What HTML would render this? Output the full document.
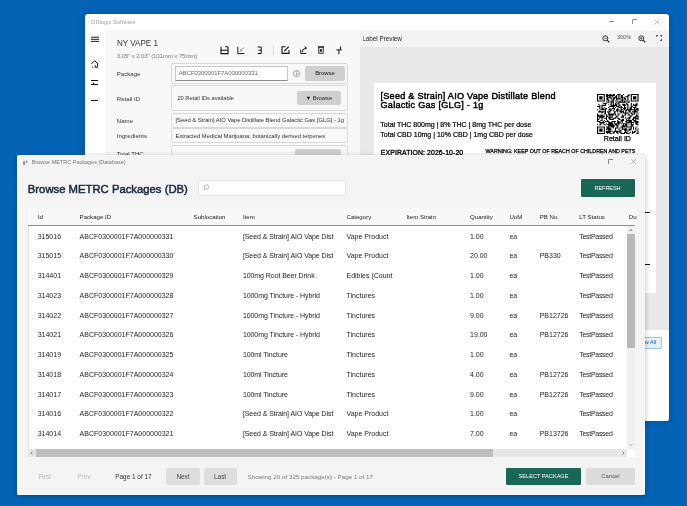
<!DOCTYPE html>
<html><head><meta charset="utf-8">
<style>
*{margin:0;padding:0;box-sizing:border-box}
html,body{width:687px;height:506px;overflow:hidden;background:#0563b6;font-family:"Liberation Sans",sans-serif}
#main,#dlg{will-change:transform}
.a{position:absolute}
.t{position:absolute;white-space:nowrap;line-height:1}
#main{left:85px;top:14px;width:584px;height:406.5px;background:#fff;border-radius:3px;overflow:hidden;box-shadow:0 0 6px rgba(0,20,60,.3)}
#dlg{left:17px;top:155px;width:628px;height:340px;background:#f4f4f4;border-radius:2.5px;overflow:hidden;box-shadow:0 1px 5px rgba(0,0,0,.3),inset 0 0 0 0.6px #fafafa}
.box{position:absolute;border:1px solid #d8d8d8;border-radius:2px;background:#f7f8fa}
.btn{position:absolute;background:#cfcfcf;border-radius:2px;text-align:center;color:#222;white-space:nowrap;line-height:1}
svg{position:absolute;overflow:visible}
</style></head><body>
<div id="main" class="a">
  <div class="t" style="left:6px;top:5.7px;font-size:5.75px;color:#a0a0a0">ORlogix Software</div>
  <!-- window controls -->
  <div class="a" style="left:524px;top:7px;width:5px;height:0.8px;background:#888"></div>
  <svg style="left:546.5px;top:4.8px" width="6" height="6"><path d="M0.5 5V0.5H5" fill="none" stroke="#777" stroke-width="0.8"/></svg>
  <svg style="left:569.4px;top:4.8px" width="7" height="7"><path d="M0.3 0.3L5.7 5.7M5.7 0.3L0.3 5.7" stroke="#aaa" stroke-width="0.7"/></svg>
  <!-- sidebar icons -->
  <svg style="left:6px;top:22px" width="9" height="7"><path d="M0 1.2H8M0 3.3H8M0 5.4H8" stroke="#111" stroke-width="0.95"/></svg>
  <svg style="left:6px;top:45.5px" width="9" height="9"><path d="M0.4 3.9L3.7 0.6L6.9 3.9 M6.6 3.6V7.2H4.2V5.2 M1 7.2H2.4" fill="none" stroke="#111" stroke-width="1"/></svg>
  <svg style="left:6px;top:65px" width="9" height="8"><path d="M0 1.5H7M0 5.5H7M2.4 3.6V5.5" stroke="#111" stroke-width="1"/></svg>
  <div class="a" style="left:6px;top:85.5px;width:7px;height:1.3px;background:#111"></div>

  <!-- left panel -->
  <div class="a" style="left:20px;top:16px;width:255px;height:391px;background:#f7f8fa"></div>
  <div class="t" style="left:31.8px;top:24.4px;font-size:9.5px;color:#3a3a3a;transform:scaleX(0.85);transform-origin:0 0">NY VAPE 1</div>
  <div class="t" style="left:31.8px;top:39.2px;font-size:6.2px;color:#7a7a7a;letter-spacing:-0.17px">3.05" x 2.03" (101mm x 75mm)</div>
  <!-- toolbar icons -->
  <svg style="left:134.5px;top:31.5px" width="10" height="10"><path d="M1 0.8V7.6H8V0.8 M5.3 0.8H8 M1 4.3H8" fill="none" stroke="#111" stroke-width="1.1"/></svg>
  <svg style="left:152px;top:31.5px" width="10" height="10"><path d="M0.8 0.8V7.6H7.6" fill="none" stroke="#111" stroke-width="0.95"/><path d="M2.6 5.8L6.6 1.6 M3.2 3.4L4.8 5" fill="none" stroke="#555" stroke-width="0.7"/></svg>
  <svg style="left:172px;top:31.5px" width="10" height="10"><path d="M0.6 1H4.2V7.5H0.8 M1.6 4.2H4.2" fill="none" stroke="#111" stroke-width="1"/></svg>
  <div class="a" style="left:187.5px;top:31.5px;width:0.8px;height:9px;background:#dcdcdc"></div>
  <svg style="left:195.5px;top:32px" width="10" height="10"><path d="M4.6 0.8H1V7.4H8V4" fill="none" stroke="#111" stroke-width="1.1"/><path d="M3.2 5.2L7.8 0.6" stroke="#111" stroke-width="1.1"/></svg>
  <svg style="left:214.5px;top:32px" width="10" height="10"><path d="M0.8 3.6V7.4H6.3" fill="none" stroke="#111" stroke-width="1"/><path d="M2.6 5.8C2.6 3.4 3.8 2.1 6.3 2.1 M4.8 0.6L6.5 2.1L4.8 3.6" fill="none" stroke="#111" stroke-width="1"/></svg>
  <svg style="left:233px;top:32px" width="10" height="10"><path d="M0 1H6" stroke="#111" stroke-width="1.3"/><path d="M0.8 1.5V7.3H5.2V1.5" fill="none" stroke="#111" stroke-width="0.9"/><rect x="2.1" y="3" width="1.6" height="2.8" fill="#111"/></svg>
  <svg style="left:250.5px;top:32px" width="10" height="10"><path d="M4.6 0.4V3.6 M0.4 3.9H5.8 M2.9 3.9V8.2" fill="none" stroke="#111" stroke-width="1"/></svg>

  <!-- form -->
  <div class="t" style="left:31.8px;top:57px;font-size:6.1px;color:#333">Package</div>
  <div class="box" style="left:86px;top:49.3px;width:177px;height:20.5px"></div>
  <div class="a" style="left:89.7px;top:52.2px;width:113.5px;height:14.6px;background:#fff;border:1px solid #c6c6c6;border-bottom-color:#8c8c8c"></div>
  <div class="t" style="left:93.8px;top:56.6px;font-size:5.9px;color:#666">ABCF0300001F7A000000331</div>
  <svg style="left:208px;top:56px" width="8" height="8"><circle cx="3.5" cy="3.5" r="3" fill="none" stroke="#777" stroke-width="0.7"/><path d="M3.5 2.8V5.3" stroke="#777" stroke-width="0.8"/><circle cx="3.5" cy="1.8" r="0.45" fill="#777"/></svg>
  <div class="btn" style="left:220px;top:52.2px;width:40px;height:14.5px;font-size:5.9px;padding-top:4.7px;color:#111">Browse</div>

  <div class="t" style="left:31.8px;top:82px;font-size:6.1px;color:#333">Retail ID</div>
  <div class="box" style="left:86px;top:70.5px;width:177px;height:26px"></div>
  <div class="t" style="left:92.4px;top:82.3px;font-size:5.7px;color:#333">20 Retail IDs available</div>
  <div class="btn" style="left:212px;top:77px;width:43.6px;height:13.8px;font-size:5.8px;padding-top:5px">&#9660; Browse</div>

  <div class="t" style="left:31.8px;top:103.7px;font-size:6.1px;color:#333">Name</div>
  <div class="box" style="left:86px;top:98.5px;width:177px;height:15px"></div>
  <div class="t" style="left:90.5px;top:104.2px;font-size:5.8px;color:#333">[Seed &amp; Strain] AIO Vape Distillate Blend Galactic Gas [GLG] - 1g</div>

  <div class="t" style="left:31.8px;top:119.4px;font-size:6.1px;color:#333">Ingredients</div>
  <div class="box" style="left:86px;top:114.3px;width:177px;height:15px"></div>
  <div class="t" style="left:90.5px;top:119.8px;font-size:5.85px;color:#333">Extracted Medical Marijuana; botanically derived terpenes</div>

  <div class="t" style="left:31.8px;top:137px;font-size:6.1px;color:#333">Total THC</div>
  <div class="t" style="left:92.6px;top:137.5px;font-size:5.8px;color:#444">800</div>
  <div class="box" style="left:86px;top:131px;width:177px;height:26px"></div>
  <div class="btn" style="left:210px;top:134.5px;width:46px;height:14px"></div>

  <!-- preview -->
  <div class="a" style="left:275px;top:16px;width:309px;height:17px;background:#f3f3f3"></div>
  <div class="t" style="left:277.3px;top:22px;font-size:6.3px;color:#222;letter-spacing:0px">Label Preview</div>
  <div class="a" style="left:275px;top:16px;width:2.6px;height:17px;background:#f3f3f3"></div>
  <svg style="left:517px;top:20.5px" width="8" height="8"><circle cx="3.3" cy="3.3" r="2.5" fill="none" stroke="#222" stroke-width="0.9"/><path d="M5.2 5.2L7.3 7.3" stroke="#222" stroke-width="1.1"/><path d="M2 3.3H4.6" stroke="#222" stroke-width="0.7"/></svg>
  <div class="t" style="left:532px;top:21px;font-size:5.5px;color:#555">300%</div>
  <svg style="left:553px;top:20.5px" width="8" height="8"><circle cx="3.3" cy="3.3" r="2.5" fill="none" stroke="#222" stroke-width="0.9"/><path d="M5.2 5.2L7.3 7.3" stroke="#222" stroke-width="1.1"/><path d="M2 3.3H4.6M3.3 2V4.6" stroke="#222" stroke-width="0.7"/></svg>
  <svg style="left:570.7px;top:21.4px" width="7" height="7"><path d="M0.5 1.8V0.5H1.8 M4.2 0.5H5.5V1.8 M5.5 4.2V5.5H4.2" fill="none" stroke="#222" stroke-width="0.9"/></svg>
  <div class="a" style="left:275px;top:33px;width:309px;height:283px;background-color:#e4e4e4;background-image:radial-gradient(circle at 1px 1px,#ececec 0.6px,transparent 0.9px);background-size:2px 2px"></div>
  <div class="a" style="left:288.6px;top:69px;width:282px;height:210px;background:#fff"></div>
  <div class="t" style="left:295.5px;top:77.6px;font-size:9.1px;font-weight:normal;color:#000;line-height:9.3px;letter-spacing:0.26px;-webkit-text-stroke:0.45px #000">[Seed &amp; Strain] AIO Vape Distillate Blend<br>Galactic Gas [GLG] - 1g</div>
  <div class="t" style="left:295.3px;top:107.2px;font-size:7px;color:#000;-webkit-text-stroke:0.2px #000">Total THC 800mg | 8% THC | 8mg THC per dose</div>
  <div class="t" style="left:295.3px;top:116.8px;font-size:7px;color:#000;-webkit-text-stroke:0.2px #000">Total CBD 10mg | 10% CBD | 1mg CBD per dose</div>
  <div class="t" style="left:295.8px;top:135.8px;font-size:6.9px;font-weight:normal;color:#000;-webkit-text-stroke:0.3px #000;letter-spacing:0.1px">EXPIRATION: 2026-10-20</div>
  <div class="t" style="left:400.5px;top:135px;font-size:5.3px;font-weight:normal;color:#000;-webkit-text-stroke:0.25px #000;letter-spacing:0.02px">WARNING: KEEP OUT OF REACH OF CHILDREN AND PETS</div>
  <svg style="left:512.1px;top:79.6px" width="41.6" height="40" viewBox="0 0 37 37" preserveAspectRatio="none" shape-rendering="geometricPrecision"><path d="M0 0h1v1h-1zM0 1h1v1h-1zM0 2h1v1h-1zM0 3h1v1h-1zM0 4h1v1h-1zM0 5h1v1h-1zM0 6h1v1h-1zM0 11h1v1h-1zM0 14h1v1h-1zM0 18h1v1h-1zM0 19h1v1h-1zM0 20h1v1h-1zM0 21h1v1h-1zM0 22h1v1h-1zM0 23h1v1h-1zM0 24h1v1h-1zM0 25h1v1h-1zM0 28h1v1h-1zM0 30h1v1h-1zM0 31h1v1h-1zM0 32h1v1h-1zM0 33h1v1h-1zM0 34h1v1h-1zM0 35h1v1h-1zM0 36h1v1h-1zM1 0h1v1h-1zM1 6h1v1h-1zM1 9h1v1h-1zM1 11h1v1h-1zM1 16h1v1h-1zM1 19h1v1h-1zM1 20h1v1h-1zM1 23h1v1h-1zM1 25h1v1h-1zM1 30h1v1h-1zM1 36h1v1h-1zM2 0h1v1h-1zM2 2h1v1h-1zM2 3h1v1h-1zM2 4h1v1h-1zM2 6h1v1h-1zM2 10h1v1h-1zM2 11h1v1h-1zM2 12h1v1h-1zM2 13h1v1h-1zM2 15h1v1h-1zM2 16h1v1h-1zM2 20h1v1h-1zM2 21h1v1h-1zM2 22h1v1h-1zM2 25h1v1h-1zM2 26h1v1h-1zM2 28h1v1h-1zM2 30h1v1h-1zM2 32h1v1h-1zM2 33h1v1h-1zM2 34h1v1h-1zM2 36h1v1h-1zM3 0h1v1h-1zM3 2h1v1h-1zM3 3h1v1h-1zM3 4h1v1h-1zM3 6h1v1h-1zM3 14h1v1h-1zM3 16h1v1h-1zM3 19h1v1h-1zM3 20h1v1h-1zM3 21h1v1h-1zM3 24h1v1h-1zM3 26h1v1h-1zM3 27h1v1h-1zM3 28h1v1h-1zM3 30h1v1h-1zM3 32h1v1h-1zM3 33h1v1h-1zM3 34h1v1h-1zM3 36h1v1h-1zM4 0h1v1h-1zM4 2h1v1h-1zM4 3h1v1h-1zM4 4h1v1h-1zM4 6h1v1h-1zM4 10h1v1h-1zM4 11h1v1h-1zM4 12h1v1h-1zM4 13h1v1h-1zM4 14h1v1h-1zM4 16h1v1h-1zM4 17h1v1h-1zM4 19h1v1h-1zM4 20h1v1h-1zM4 21h1v1h-1zM4 22h1v1h-1zM4 23h1v1h-1zM4 24h1v1h-1zM4 26h1v1h-1zM4 30h1v1h-1zM4 32h1v1h-1zM4 33h1v1h-1zM4 34h1v1h-1zM4 36h1v1h-1zM5 0h1v1h-1zM5 6h1v1h-1zM5 8h1v1h-1zM5 10h1v1h-1zM5 13h1v1h-1zM5 14h1v1h-1zM5 16h1v1h-1zM5 20h1v1h-1zM5 21h1v1h-1zM5 25h1v1h-1zM5 26h1v1h-1zM5 27h1v1h-1zM5 30h1v1h-1zM5 36h1v1h-1zM6 0h1v1h-1zM6 1h1v1h-1zM6 2h1v1h-1zM6 3h1v1h-1zM6 4h1v1h-1zM6 5h1v1h-1zM6 6h1v1h-1zM6 8h1v1h-1zM6 10h1v1h-1zM6 12h1v1h-1zM6 14h1v1h-1zM6 16h1v1h-1zM6 18h1v1h-1zM6 20h1v1h-1zM6 22h1v1h-1zM6 24h1v1h-1zM6 26h1v1h-1zM6 28h1v1h-1zM6 30h1v1h-1zM6 31h1v1h-1zM6 32h1v1h-1zM6 33h1v1h-1zM6 34h1v1h-1zM6 35h1v1h-1zM6 36h1v1h-1zM7 8h1v1h-1zM7 9h1v1h-1zM7 10h1v1h-1zM7 13h1v1h-1zM7 14h1v1h-1zM7 15h1v1h-1zM7 16h1v1h-1zM7 17h1v1h-1zM7 18h1v1h-1zM7 22h1v1h-1zM7 25h1v1h-1zM7 28h1v1h-1zM8 0h1v1h-1zM8 1h1v1h-1zM8 2h1v1h-1zM8 4h1v1h-1zM8 6h1v1h-1zM8 8h1v1h-1zM8 13h1v1h-1zM8 19h1v1h-1zM8 20h1v1h-1zM8 21h1v1h-1zM8 22h1v1h-1zM8 23h1v1h-1zM8 25h1v1h-1zM8 27h1v1h-1zM8 30h1v1h-1zM8 32h1v1h-1zM8 34h1v1h-1zM8 35h1v1h-1zM9 0h1v1h-1zM9 1h1v1h-1zM9 2h1v1h-1zM9 3h1v1h-1zM9 4h1v1h-1zM9 5h1v1h-1zM9 7h1v1h-1zM9 16h1v1h-1zM9 20h1v1h-1zM9 24h1v1h-1zM9 25h1v1h-1zM9 28h1v1h-1zM9 30h1v1h-1zM9 31h1v1h-1zM9 32h1v1h-1zM9 34h1v1h-1zM9 35h1v1h-1zM9 36h1v1h-1zM10 1h1v1h-1zM10 3h1v1h-1zM10 5h1v1h-1zM10 6h1v1h-1zM10 7h1v1h-1zM10 9h1v1h-1zM10 12h1v1h-1zM10 14h1v1h-1zM10 16h1v1h-1zM10 17h1v1h-1zM10 18h1v1h-1zM10 19h1v1h-1zM10 21h1v1h-1zM10 22h1v1h-1zM10 25h1v1h-1zM10 26h1v1h-1zM10 27h1v1h-1zM10 28h1v1h-1zM10 29h1v1h-1zM10 30h1v1h-1zM10 31h1v1h-1zM10 32h1v1h-1zM10 33h1v1h-1zM10 34h1v1h-1zM10 35h1v1h-1zM11 0h1v1h-1zM11 1h1v1h-1zM11 2h1v1h-1zM11 3h1v1h-1zM11 11h1v1h-1zM11 13h1v1h-1zM11 14h1v1h-1zM11 15h1v1h-1zM11 16h1v1h-1zM11 18h1v1h-1zM11 19h1v1h-1zM11 20h1v1h-1zM11 21h1v1h-1zM11 22h1v1h-1zM11 23h1v1h-1zM11 26h1v1h-1zM11 27h1v1h-1zM11 28h1v1h-1zM11 29h1v1h-1zM11 31h1v1h-1zM11 32h1v1h-1zM11 33h1v1h-1zM11 34h1v1h-1zM11 35h1v1h-1zM11 36h1v1h-1zM12 0h1v1h-1zM12 1h1v1h-1zM12 3h1v1h-1zM12 4h1v1h-1zM12 6h1v1h-1zM12 7h1v1h-1zM12 8h1v1h-1zM12 9h1v1h-1zM12 10h1v1h-1zM12 11h1v1h-1zM12 14h1v1h-1zM12 15h1v1h-1zM12 18h1v1h-1zM12 19h1v1h-1zM12 21h1v1h-1zM12 23h1v1h-1zM12 26h1v1h-1zM12 27h1v1h-1zM12 28h1v1h-1zM12 29h1v1h-1zM12 30h1v1h-1zM12 32h1v1h-1zM12 34h1v1h-1zM12 36h1v1h-1zM13 1h1v1h-1zM13 2h1v1h-1zM13 5h1v1h-1zM13 7h1v1h-1zM13 10h1v1h-1zM13 11h1v1h-1zM13 13h1v1h-1zM13 18h1v1h-1zM13 19h1v1h-1zM13 20h1v1h-1zM13 21h1v1h-1zM13 23h1v1h-1zM13 25h1v1h-1zM13 26h1v1h-1zM13 27h1v1h-1zM13 28h1v1h-1zM13 29h1v1h-1zM13 30h1v1h-1zM13 34h1v1h-1zM14 0h1v1h-1zM14 1h1v1h-1zM14 3h1v1h-1zM14 4h1v1h-1zM14 5h1v1h-1zM14 6h1v1h-1zM14 7h1v1h-1zM14 8h1v1h-1zM14 9h1v1h-1zM14 10h1v1h-1zM14 11h1v1h-1zM14 12h1v1h-1zM14 13h1v1h-1zM14 15h1v1h-1zM14 18h1v1h-1zM14 19h1v1h-1zM14 22h1v1h-1zM14 23h1v1h-1zM14 25h1v1h-1zM14 28h1v1h-1zM14 29h1v1h-1zM14 30h1v1h-1zM14 31h1v1h-1zM14 35h1v1h-1zM14 36h1v1h-1zM15 0h1v1h-1zM15 1h1v1h-1zM15 3h1v1h-1zM15 4h1v1h-1zM15 10h1v1h-1zM15 11h1v1h-1zM15 13h1v1h-1zM15 14h1v1h-1zM15 16h1v1h-1zM15 17h1v1h-1zM15 18h1v1h-1zM15 22h1v1h-1zM15 25h1v1h-1zM15 26h1v1h-1zM15 27h1v1h-1zM15 29h1v1h-1zM15 34h1v1h-1zM15 35h1v1h-1zM16 2h1v1h-1zM16 3h1v1h-1zM16 6h1v1h-1zM16 8h1v1h-1zM16 9h1v1h-1zM16 10h1v1h-1zM16 12h1v1h-1zM16 16h1v1h-1zM16 18h1v1h-1zM16 19h1v1h-1zM16 21h1v1h-1zM16 22h1v1h-1zM16 25h1v1h-1zM16 27h1v1h-1zM16 28h1v1h-1zM16 31h1v1h-1zM16 32h1v1h-1zM16 33h1v1h-1zM16 34h1v1h-1zM17 1h1v1h-1zM17 2h1v1h-1zM17 3h1v1h-1zM17 4h1v1h-1zM17 5h1v1h-1zM17 7h1v1h-1zM17 9h1v1h-1zM17 10h1v1h-1zM17 11h1v1h-1zM17 14h1v1h-1zM17 15h1v1h-1zM17 20h1v1h-1zM17 21h1v1h-1zM17 27h1v1h-1zM17 28h1v1h-1zM17 29h1v1h-1zM17 31h1v1h-1zM17 34h1v1h-1zM17 35h1v1h-1zM18 0h1v1h-1zM18 4h1v1h-1zM18 6h1v1h-1zM18 8h1v1h-1zM18 11h1v1h-1zM18 13h1v1h-1zM18 14h1v1h-1zM18 15h1v1h-1zM18 16h1v1h-1zM18 18h1v1h-1zM18 20h1v1h-1zM18 22h1v1h-1zM18 24h1v1h-1zM18 25h1v1h-1zM18 26h1v1h-1zM18 27h1v1h-1zM18 29h1v1h-1zM18 30h1v1h-1zM18 31h1v1h-1zM18 34h1v1h-1zM18 35h1v1h-1zM18 36h1v1h-1zM19 0h1v1h-1zM19 1h1v1h-1zM19 2h1v1h-1zM19 3h1v1h-1zM19 4h1v1h-1zM19 7h1v1h-1zM19 8h1v1h-1zM19 9h1v1h-1zM19 10h1v1h-1zM19 11h1v1h-1zM19 12h1v1h-1zM19 14h1v1h-1zM19 18h1v1h-1zM19 19h1v1h-1zM19 22h1v1h-1zM19 23h1v1h-1zM19 25h1v1h-1zM19 26h1v1h-1zM19 27h1v1h-1zM19 28h1v1h-1zM19 32h1v1h-1zM19 34h1v1h-1zM20 0h1v1h-1zM20 4h1v1h-1zM20 6h1v1h-1zM20 7h1v1h-1zM20 10h1v1h-1zM20 12h1v1h-1zM20 15h1v1h-1zM20 16h1v1h-1zM20 23h1v1h-1zM20 26h1v1h-1zM20 31h1v1h-1zM20 33h1v1h-1zM20 34h1v1h-1zM20 35h1v1h-1zM21 1h1v1h-1zM21 2h1v1h-1zM21 3h1v1h-1zM21 5h1v1h-1zM21 7h1v1h-1zM21 11h1v1h-1zM21 12h1v1h-1zM21 13h1v1h-1zM21 14h1v1h-1zM21 15h1v1h-1zM21 16h1v1h-1zM21 17h1v1h-1zM21 21h1v1h-1zM21 24h1v1h-1zM21 25h1v1h-1zM21 27h1v1h-1zM21 30h1v1h-1zM21 33h1v1h-1zM21 35h1v1h-1zM21 36h1v1h-1zM22 1h1v1h-1zM22 2h1v1h-1zM22 3h1v1h-1zM22 4h1v1h-1zM22 5h1v1h-1zM22 6h1v1h-1zM22 7h1v1h-1zM22 9h1v1h-1zM22 12h1v1h-1zM22 14h1v1h-1zM22 16h1v1h-1zM22 19h1v1h-1zM22 20h1v1h-1zM22 21h1v1h-1zM22 23h1v1h-1zM22 24h1v1h-1zM22 25h1v1h-1zM22 26h1v1h-1zM22 29h1v1h-1zM22 30h1v1h-1zM22 31h1v1h-1zM22 32h1v1h-1zM22 36h1v1h-1zM23 0h1v1h-1zM23 3h1v1h-1zM23 5h1v1h-1zM23 7h1v1h-1zM23 9h1v1h-1zM23 10h1v1h-1zM23 13h1v1h-1zM23 15h1v1h-1zM23 16h1v1h-1zM23 17h1v1h-1zM23 20h1v1h-1zM23 21h1v1h-1zM23 23h1v1h-1zM23 24h1v1h-1zM23 27h1v1h-1zM23 28h1v1h-1zM23 29h1v1h-1zM23 30h1v1h-1zM23 32h1v1h-1zM23 36h1v1h-1zM24 3h1v1h-1zM24 4h1v1h-1zM24 6h1v1h-1zM24 7h1v1h-1zM24 9h1v1h-1zM24 10h1v1h-1zM24 11h1v1h-1zM24 12h1v1h-1zM24 13h1v1h-1zM24 14h1v1h-1zM24 17h1v1h-1zM24 19h1v1h-1zM24 27h1v1h-1zM24 29h1v1h-1zM24 30h1v1h-1zM24 32h1v1h-1zM24 33h1v1h-1zM24 35h1v1h-1zM24 36h1v1h-1zM25 2h1v1h-1zM25 4h1v1h-1zM25 5h1v1h-1zM25 7h1v1h-1zM25 10h1v1h-1zM25 12h1v1h-1zM25 13h1v1h-1zM25 15h1v1h-1zM25 16h1v1h-1zM25 17h1v1h-1zM25 18h1v1h-1zM25 19h1v1h-1zM25 21h1v1h-1zM25 22h1v1h-1zM25 25h1v1h-1zM25 27h1v1h-1zM25 28h1v1h-1zM25 29h1v1h-1zM25 31h1v1h-1zM25 32h1v1h-1zM25 33h1v1h-1zM25 34h1v1h-1zM25 35h1v1h-1zM26 2h1v1h-1zM26 6h1v1h-1zM26 8h1v1h-1zM26 9h1v1h-1zM26 14h1v1h-1zM26 15h1v1h-1zM26 17h1v1h-1zM26 23h1v1h-1zM26 24h1v1h-1zM26 25h1v1h-1zM26 26h1v1h-1zM26 27h1v1h-1zM26 28h1v1h-1zM26 29h1v1h-1zM26 30h1v1h-1zM26 32h1v1h-1zM26 33h1v1h-1zM26 35h1v1h-1zM26 36h1v1h-1zM27 1h1v1h-1zM27 2h1v1h-1zM27 3h1v1h-1zM27 4h1v1h-1zM27 5h1v1h-1zM27 7h1v1h-1zM27 9h1v1h-1zM27 10h1v1h-1zM27 11h1v1h-1zM27 12h1v1h-1zM27 13h1v1h-1zM27 14h1v1h-1zM27 17h1v1h-1zM27 19h1v1h-1zM27 22h1v1h-1zM27 24h1v1h-1zM27 26h1v1h-1zM27 30h1v1h-1zM27 34h1v1h-1zM27 36h1v1h-1zM28 0h1v1h-1zM28 1h1v1h-1zM28 6h1v1h-1zM28 7h1v1h-1zM28 14h1v1h-1zM28 15h1v1h-1zM28 16h1v1h-1zM28 18h1v1h-1zM28 19h1v1h-1zM28 21h1v1h-1zM28 22h1v1h-1zM28 23h1v1h-1zM28 24h1v1h-1zM28 25h1v1h-1zM28 26h1v1h-1zM28 28h1v1h-1zM28 30h1v1h-1zM28 32h1v1h-1zM28 33h1v1h-1zM28 36h1v1h-1zM29 12h1v1h-1zM29 13h1v1h-1zM29 14h1v1h-1zM29 15h1v1h-1zM29 16h1v1h-1zM29 20h1v1h-1zM29 21h1v1h-1zM29 22h1v1h-1zM29 24h1v1h-1zM29 25h1v1h-1zM29 26h1v1h-1zM29 30h1v1h-1zM29 32h1v1h-1zM29 33h1v1h-1zM29 35h1v1h-1zM30 0h1v1h-1zM30 1h1v1h-1zM30 2h1v1h-1zM30 3h1v1h-1zM30 4h1v1h-1zM30 5h1v1h-1zM30 6h1v1h-1zM30 8h1v1h-1zM30 9h1v1h-1zM30 10h1v1h-1zM30 11h1v1h-1zM30 12h1v1h-1zM30 13h1v1h-1zM30 14h1v1h-1zM30 17h1v1h-1zM30 18h1v1h-1zM30 20h1v1h-1zM30 24h1v1h-1zM30 25h1v1h-1zM30 26h1v1h-1zM30 27h1v1h-1zM30 28h1v1h-1zM30 29h1v1h-1zM30 30h1v1h-1zM30 31h1v1h-1zM30 32h1v1h-1zM31 0h1v1h-1zM31 6h1v1h-1zM31 11h1v1h-1zM31 14h1v1h-1zM31 16h1v1h-1zM31 18h1v1h-1zM31 19h1v1h-1zM31 23h1v1h-1zM31 26h1v1h-1zM31 28h1v1h-1zM31 29h1v1h-1zM31 34h1v1h-1zM31 35h1v1h-1zM31 36h1v1h-1zM32 0h1v1h-1zM32 2h1v1h-1zM32 3h1v1h-1zM32 4h1v1h-1zM32 6h1v1h-1zM32 9h1v1h-1zM32 10h1v1h-1zM32 12h1v1h-1zM32 14h1v1h-1zM32 16h1v1h-1zM32 18h1v1h-1zM32 21h1v1h-1zM32 22h1v1h-1zM32 23h1v1h-1zM32 24h1v1h-1zM32 26h1v1h-1zM32 28h1v1h-1zM32 30h1v1h-1zM32 31h1v1h-1zM32 32h1v1h-1zM32 35h1v1h-1zM33 0h1v1h-1zM33 2h1v1h-1zM33 3h1v1h-1zM33 4h1v1h-1zM33 6h1v1h-1zM33 10h1v1h-1zM33 12h1v1h-1zM33 13h1v1h-1zM33 14h1v1h-1zM33 15h1v1h-1zM33 16h1v1h-1zM33 17h1v1h-1zM33 18h1v1h-1zM33 21h1v1h-1zM33 22h1v1h-1zM33 24h1v1h-1zM33 25h1v1h-1zM33 34h1v1h-1zM33 35h1v1h-1zM34 0h1v1h-1zM34 2h1v1h-1zM34 3h1v1h-1zM34 4h1v1h-1zM34 6h1v1h-1zM34 9h1v1h-1zM34 10h1v1h-1zM34 11h1v1h-1zM34 12h1v1h-1zM34 14h1v1h-1zM34 15h1v1h-1zM34 16h1v1h-1zM34 20h1v1h-1zM34 21h1v1h-1zM34 22h1v1h-1zM34 23h1v1h-1zM34 24h1v1h-1zM34 25h1v1h-1zM34 26h1v1h-1zM34 27h1v1h-1zM34 31h1v1h-1zM34 32h1v1h-1zM34 34h1v1h-1zM35 0h1v1h-1zM35 6h1v1h-1zM35 8h1v1h-1zM35 9h1v1h-1zM35 10h1v1h-1zM35 13h1v1h-1zM35 14h1v1h-1zM35 16h1v1h-1zM35 18h1v1h-1zM35 19h1v1h-1zM35 20h1v1h-1zM35 22h1v1h-1zM35 25h1v1h-1zM35 26h1v1h-1zM35 27h1v1h-1zM35 28h1v1h-1zM35 30h1v1h-1zM35 33h1v1h-1zM35 36h1v1h-1zM36 0h1v1h-1zM36 1h1v1h-1zM36 2h1v1h-1zM36 3h1v1h-1zM36 4h1v1h-1zM36 5h1v1h-1zM36 6h1v1h-1zM36 13h1v1h-1zM36 14h1v1h-1zM36 15h1v1h-1zM36 17h1v1h-1zM36 20h1v1h-1zM36 21h1v1h-1zM36 22h1v1h-1zM36 23h1v1h-1zM36 25h1v1h-1zM36 26h1v1h-1zM36 28h1v1h-1zM36 32h1v1h-1zM36 34h1v1h-1zM36 35h1v1h-1zM36 36h1v1h-1z" fill="#000"/></svg>
  <div class="t" style="left:518.8px;top:122px;font-size:7.1px;color:#000;-webkit-text-stroke:0.25px #000">Retail ID</div>
  <div class="a" style="left:560px;top:197.5px;width:5px;height:1px;background:#111"></div>
  <div class="a" style="left:560px;top:250px;width:5px;height:1px;background:#111"></div>
  <!-- bottom area -->
  <div class="a" style="left:275px;top:316px;width:309px;height:91px;background:#fff"></div>
  <div class="a" style="left:540px;top:322.5px;width:37px;height:12px;background:#e8f1fb;border:1px solid #9cc3ea;border-radius:2px"></div>
  <div class="t" style="left:552px;top:326px;font-size:5.5px;color:#1a5ea8">View All</div>
</div>

<div id="dlg" class="a">
  <svg style="left:5.5px;top:5px" width="6" height="5"><path d="M0 2.2H2.2M0 4H2.2" stroke="#333" stroke-width="0.9"/><path d="M3.8 0.5V3" stroke="#555" stroke-width="0.8"/></svg>
  <div class="t" style="left:14.8px;top:5.2px;font-size:5.5px;color:#777">Browse METRC Packages (Database)</div>
  <svg style="left:590.5px;top:4px" width="6" height="6"><path d="M0.5 5V0.5H5" fill="none" stroke="#777" stroke-width="0.9"/></svg>
  <svg style="left:614.2px;top:4px" width="6" height="6"><path d="M0.3 0.3L4.8 4.8M4.8 0.3L0.3 4.8" stroke="#999" stroke-width="0.7"/></svg>
  <div class="t" style="left:10.8px;top:28.9px;font-size:11.3px;font-weight:normal;color:#1b2a3e;letter-spacing:0px;-webkit-text-stroke:0.5px #1b2a3e">Browse METRC Packages (DB)</div>
  <div class="a" style="left:180.5px;top:25px;width:148px;height:16.2px;background:#fff;border-radius:2px;border:1px solid #e4e4e4"></div>
  <svg style="left:185px;top:29px" width="8" height="8"><circle cx="4.5" cy="3" r="2.2" fill="none" stroke="#888" stroke-width="0.6"/><path d="M3 4.5L1 6.5" stroke="#888" stroke-width="0.7"/></svg>
  <div class="a" style="left:564px;top:24px;width:54px;height:18px;background:#1a6656;border-radius:1px"></div>
  <div class="t" style="left:577.5px;top:31px;font-size:5.6px;color:#fff;letter-spacing:-0.1px">REFRESH</div>

  <!-- grid -->
  <div class="a" style="left:10.5px;top:52.5px;width:607.5px;height:249.5px;background:#fff;border:1px solid #e2e2e2;border-top:none"></div>
  <div class="a" style="left:10.5px;top:52.5px;width:607.5px;height:18px;background:#f7f8fa;border-bottom:1.2px solid #8f8f8f"></div>
<div class="t" style="left:20.7px;top:58.65px;font-size:6.1px;color:#222;font-weight:normal;">Id</div>
<div class="t" style="left:62.6px;top:58.65px;font-size:6.1px;color:#222;font-weight:normal;">Package ID</div>
<div class="t" style="left:176.6px;top:58.65px;font-size:6.1px;color:#222;font-weight:normal;">Sublocation</div>
<div class="t" style="left:225.9px;top:58.65px;font-size:6.1px;color:#222;font-weight:normal;">Item</div>
<div class="t" style="left:329.5px;top:58.65px;font-size:6.1px;color:#222;font-weight:normal;">Category</div>
<div class="t" style="left:389.4px;top:58.65px;font-size:6.1px;color:#222;font-weight:normal;">Item Strain</div>
<div class="t" style="left:453.0px;top:58.65px;font-size:6.1px;color:#222;font-weight:normal;">Quantity</div>
<div class="t" style="left:492.4px;top:58.65px;font-size:6.1px;color:#222;font-weight:normal;">UoM</div>
<div class="t" style="left:522.7px;top:58.65px;font-size:6.1px;color:#222;font-weight:normal;">PB No.</div>
<div class="t" style="left:562.3px;top:58.65px;font-size:6.1px;color:#222;font-weight:normal;">LT Status</div>
<div class="t" style="left:611.8px;top:58.65px;font-size:6.1px;color:#222;font-weight:normal;">Du</div>
<div class="t" style="left:20.7px;top:77.50px;font-size:7.0px;color:#1e1e1e;font-weight:normal;">315016</div>
<div class="t" style="left:62.6px;top:77.50px;font-size:7.0px;color:#1e1e1e;font-weight:normal;">ABCF0300001F7A000000331</div>
<div class="t" style="left:225.9px;top:77.50px;font-size:7.0px;color:#1e1e1e;font-weight:normal;letter-spacing:-0.07px">[Seed & Strain] AIO Vape Dist</div>
<div class="t" style="left:329.5px;top:77.50px;font-size:7.0px;color:#1e1e1e;font-weight:normal;">Vape Product</div>
<div class="t" style="left:453.0px;top:77.50px;font-size:7.0px;color:#1e1e1e;font-weight:normal;">1.00</div>
<div class="t" style="left:492.4px;top:77.50px;font-size:7.0px;color:#1e1e1e;font-weight:normal;">ea</div>
<div class="t" style="left:562.3px;top:77.50px;font-size:7.0px;color:#1e1e1e;font-weight:normal;letter-spacing:-0.3px">TestPassed</div>
<div class="t" style="left:20.7px;top:97.25px;font-size:7.0px;color:#1e1e1e;font-weight:normal;">315015</div>
<div class="t" style="left:62.6px;top:97.25px;font-size:7.0px;color:#1e1e1e;font-weight:normal;">ABCF0300001F7A000000330</div>
<div class="t" style="left:225.9px;top:97.25px;font-size:7.0px;color:#1e1e1e;font-weight:normal;letter-spacing:-0.07px">[Seed & Strain] AIO Vape Dist</div>
<div class="t" style="left:329.5px;top:97.25px;font-size:7.0px;color:#1e1e1e;font-weight:normal;">Vape Product</div>
<div class="t" style="left:453.0px;top:97.25px;font-size:7.0px;color:#1e1e1e;font-weight:normal;">20.00</div>
<div class="t" style="left:492.4px;top:97.25px;font-size:7.0px;color:#1e1e1e;font-weight:normal;">ea</div>
<div class="t" style="left:522.7px;top:97.25px;font-size:7.0px;color:#1e1e1e;font-weight:normal;">PB330</div>
<div class="t" style="left:562.3px;top:97.25px;font-size:7.0px;color:#1e1e1e;font-weight:normal;letter-spacing:-0.3px">TestPassed</div>
<div class="t" style="left:20.7px;top:117.00px;font-size:7.0px;color:#1e1e1e;font-weight:normal;">314401</div>
<div class="t" style="left:62.6px;top:117.00px;font-size:7.0px;color:#1e1e1e;font-weight:normal;">ABCF0300001F7A000000329</div>
<div class="t" style="left:225.9px;top:117.00px;font-size:7.0px;color:#1e1e1e;font-weight:normal;letter-spacing:-0.07px">100mg Root Beer Drink</div>
<div class="t" style="left:329.5px;top:117.00px;font-size:7.0px;color:#1e1e1e;font-weight:normal;">Edibles (Count</div>
<div class="t" style="left:453.0px;top:117.00px;font-size:7.0px;color:#1e1e1e;font-weight:normal;">1.00</div>
<div class="t" style="left:492.4px;top:117.00px;font-size:7.0px;color:#1e1e1e;font-weight:normal;">ea</div>
<div class="t" style="left:562.3px;top:117.00px;font-size:7.0px;color:#1e1e1e;font-weight:normal;letter-spacing:-0.3px">TestPassed</div>
<div class="t" style="left:20.7px;top:136.75px;font-size:7.0px;color:#1e1e1e;font-weight:normal;">314023</div>
<div class="t" style="left:62.6px;top:136.75px;font-size:7.0px;color:#1e1e1e;font-weight:normal;">ABCF0300001F7A000000328</div>
<div class="t" style="left:225.9px;top:136.75px;font-size:7.0px;color:#1e1e1e;font-weight:normal;letter-spacing:-0.07px">1000mg Tincture - Hybrid</div>
<div class="t" style="left:329.5px;top:136.75px;font-size:7.0px;color:#1e1e1e;font-weight:normal;">Tinctures</div>
<div class="t" style="left:453.0px;top:136.75px;font-size:7.0px;color:#1e1e1e;font-weight:normal;">1.00</div>
<div class="t" style="left:492.4px;top:136.75px;font-size:7.0px;color:#1e1e1e;font-weight:normal;">ea</div>
<div class="t" style="left:562.3px;top:136.75px;font-size:7.0px;color:#1e1e1e;font-weight:normal;letter-spacing:-0.3px">TestPassed</div>
<div class="t" style="left:20.7px;top:156.50px;font-size:7.0px;color:#1e1e1e;font-weight:normal;">314022</div>
<div class="t" style="left:62.6px;top:156.50px;font-size:7.0px;color:#1e1e1e;font-weight:normal;">ABCF0300001F7A000000327</div>
<div class="t" style="left:225.9px;top:156.50px;font-size:7.0px;color:#1e1e1e;font-weight:normal;letter-spacing:-0.07px">1000mg Tincture - Hybrid</div>
<div class="t" style="left:329.5px;top:156.50px;font-size:7.0px;color:#1e1e1e;font-weight:normal;">Tinctures</div>
<div class="t" style="left:453.0px;top:156.50px;font-size:7.0px;color:#1e1e1e;font-weight:normal;">9.00</div>
<div class="t" style="left:492.4px;top:156.50px;font-size:7.0px;color:#1e1e1e;font-weight:normal;">ea</div>
<div class="t" style="left:522.7px;top:156.50px;font-size:7.0px;color:#1e1e1e;font-weight:normal;">PB12726</div>
<div class="t" style="left:562.3px;top:156.50px;font-size:7.0px;color:#1e1e1e;font-weight:normal;letter-spacing:-0.3px">TestPassed</div>
<div class="t" style="left:20.7px;top:176.25px;font-size:7.0px;color:#1e1e1e;font-weight:normal;">314021</div>
<div class="t" style="left:62.6px;top:176.25px;font-size:7.0px;color:#1e1e1e;font-weight:normal;">ABCF0300001F7A000000326</div>
<div class="t" style="left:225.9px;top:176.25px;font-size:7.0px;color:#1e1e1e;font-weight:normal;letter-spacing:-0.07px">1000mg Tincture - Hybrid</div>
<div class="t" style="left:329.5px;top:176.25px;font-size:7.0px;color:#1e1e1e;font-weight:normal;">Tinctures</div>
<div class="t" style="left:453.0px;top:176.25px;font-size:7.0px;color:#1e1e1e;font-weight:normal;">19.00</div>
<div class="t" style="left:492.4px;top:176.25px;font-size:7.0px;color:#1e1e1e;font-weight:normal;">ea</div>
<div class="t" style="left:522.7px;top:176.25px;font-size:7.0px;color:#1e1e1e;font-weight:normal;">PB12726</div>
<div class="t" style="left:562.3px;top:176.25px;font-size:7.0px;color:#1e1e1e;font-weight:normal;letter-spacing:-0.3px">TestPassed</div>
<div class="t" style="left:20.7px;top:196.00px;font-size:7.0px;color:#1e1e1e;font-weight:normal;">314019</div>
<div class="t" style="left:62.6px;top:196.00px;font-size:7.0px;color:#1e1e1e;font-weight:normal;">ABCF0300001F7A000000325</div>
<div class="t" style="left:225.9px;top:196.00px;font-size:7.0px;color:#1e1e1e;font-weight:normal;letter-spacing:-0.07px">100ml Tincture</div>
<div class="t" style="left:329.5px;top:196.00px;font-size:7.0px;color:#1e1e1e;font-weight:normal;">Tinctures</div>
<div class="t" style="left:453.0px;top:196.00px;font-size:7.0px;color:#1e1e1e;font-weight:normal;">1.00</div>
<div class="t" style="left:492.4px;top:196.00px;font-size:7.0px;color:#1e1e1e;font-weight:normal;">ea</div>
<div class="t" style="left:562.3px;top:196.00px;font-size:7.0px;color:#1e1e1e;font-weight:normal;letter-spacing:-0.3px">TestPassed</div>
<div class="t" style="left:20.7px;top:215.75px;font-size:7.0px;color:#1e1e1e;font-weight:normal;">314018</div>
<div class="t" style="left:62.6px;top:215.75px;font-size:7.0px;color:#1e1e1e;font-weight:normal;">ABCF0300001F7A000000324</div>
<div class="t" style="left:225.9px;top:215.75px;font-size:7.0px;color:#1e1e1e;font-weight:normal;letter-spacing:-0.07px">100ml Tincture</div>
<div class="t" style="left:329.5px;top:215.75px;font-size:7.0px;color:#1e1e1e;font-weight:normal;">Tinctures</div>
<div class="t" style="left:453.0px;top:215.75px;font-size:7.0px;color:#1e1e1e;font-weight:normal;">4.00</div>
<div class="t" style="left:492.4px;top:215.75px;font-size:7.0px;color:#1e1e1e;font-weight:normal;">ea</div>
<div class="t" style="left:522.7px;top:215.75px;font-size:7.0px;color:#1e1e1e;font-weight:normal;">PB12726</div>
<div class="t" style="left:562.3px;top:215.75px;font-size:7.0px;color:#1e1e1e;font-weight:normal;letter-spacing:-0.3px">TestPassed</div>
<div class="t" style="left:20.7px;top:235.50px;font-size:7.0px;color:#1e1e1e;font-weight:normal;">314017</div>
<div class="t" style="left:62.6px;top:235.50px;font-size:7.0px;color:#1e1e1e;font-weight:normal;">ABCF0300001F7A000000323</div>
<div class="t" style="left:225.9px;top:235.50px;font-size:7.0px;color:#1e1e1e;font-weight:normal;letter-spacing:-0.07px">100ml Tincture</div>
<div class="t" style="left:329.5px;top:235.50px;font-size:7.0px;color:#1e1e1e;font-weight:normal;">Tinctures</div>
<div class="t" style="left:453.0px;top:235.50px;font-size:7.0px;color:#1e1e1e;font-weight:normal;">9.00</div>
<div class="t" style="left:492.4px;top:235.50px;font-size:7.0px;color:#1e1e1e;font-weight:normal;">ea</div>
<div class="t" style="left:522.7px;top:235.50px;font-size:7.0px;color:#1e1e1e;font-weight:normal;">PB12726</div>
<div class="t" style="left:562.3px;top:235.50px;font-size:7.0px;color:#1e1e1e;font-weight:normal;letter-spacing:-0.3px">TestPassed</div>
<div class="t" style="left:20.7px;top:255.25px;font-size:7.0px;color:#1e1e1e;font-weight:normal;">314016</div>
<div class="t" style="left:62.6px;top:255.25px;font-size:7.0px;color:#1e1e1e;font-weight:normal;">ABCF0300001F7A000000322</div>
<div class="t" style="left:225.9px;top:255.25px;font-size:7.0px;color:#1e1e1e;font-weight:normal;letter-spacing:-0.07px">[Seed & Strain] AIO Vape Dist</div>
<div class="t" style="left:329.5px;top:255.25px;font-size:7.0px;color:#1e1e1e;font-weight:normal;">Vape Product</div>
<div class="t" style="left:453.0px;top:255.25px;font-size:7.0px;color:#1e1e1e;font-weight:normal;">1.00</div>
<div class="t" style="left:492.4px;top:255.25px;font-size:7.0px;color:#1e1e1e;font-weight:normal;">ea</div>
<div class="t" style="left:562.3px;top:255.25px;font-size:7.0px;color:#1e1e1e;font-weight:normal;letter-spacing:-0.3px">TestPassed</div>
<div class="t" style="left:20.7px;top:275.00px;font-size:7.0px;color:#1e1e1e;font-weight:normal;">314014</div>
<div class="t" style="left:62.6px;top:275.00px;font-size:7.0px;color:#1e1e1e;font-weight:normal;">ABCF0300001F7A000000321</div>
<div class="t" style="left:225.9px;top:275.00px;font-size:7.0px;color:#1e1e1e;font-weight:normal;letter-spacing:-0.07px">[Seed & Strain] AIO Vape Dist</div>
<div class="t" style="left:329.5px;top:275.00px;font-size:7.0px;color:#1e1e1e;font-weight:normal;">Vape Product</div>
<div class="t" style="left:453.0px;top:275.00px;font-size:7.0px;color:#1e1e1e;font-weight:normal;">7.00</div>
<div class="t" style="left:492.4px;top:275.00px;font-size:7.0px;color:#1e1e1e;font-weight:normal;">ea</div>
<div class="t" style="left:522.7px;top:275.00px;font-size:7.0px;color:#1e1e1e;font-weight:normal;">PB13726</div>
<div class="t" style="left:562.3px;top:275.00px;font-size:7.0px;color:#1e1e1e;font-weight:normal;letter-spacing:-0.3px">TestPassed</div>
  <!-- v scrollbar -->
  <div class="a" style="left:610px;top:71px;width:8px;height:223px;background:#f0f0f0"></div>
  <div class="a" style="left:610px;top:79px;width:8px;height:113.6px;background:#b9b9b9"></div>
  <svg style="left:611px;top:72.5px" width="6" height="4"><path d="M1.8 3L3 1.5L4.2 3" fill="none" stroke="#444" stroke-width="0.7"/></svg>
  <svg style="left:611px;top:288px" width="6" height="4"><path d="M1.5 1L3 2.5L4.5 1" fill="none" stroke="#777" stroke-width="0.6"/></svg>
  <!-- h scrollbar -->
  <div class="a" style="left:10.5px;top:294.3px;width:599.5px;height:7.5px;background:#e6e6e6"></div>
  <div class="a" style="left:19.2px;top:294.3px;width:457px;height:7.5px;background:#bdbdbd"></div>
  <svg style="left:12px;top:295px" width="6" height="6"><path d="M3.5 1.5L2 3L3.5 4.5" fill="none" stroke="#555" stroke-width="0.6"/></svg>
  <svg style="left:603px;top:295px" width="6" height="6"><path d="M2.5 1.5L4 3L2.5 4.5" fill="none" stroke="#555" stroke-width="0.6"/></svg>
  <div class="a" style="left:610px;top:294.3px;width:8px;height:7.5px;background:#fff"></div>

  <!-- footer -->
  <div class="t" style="left:21.4px;top:318.5px;font-size:6.5px;color:#b8b8b8">First</div>
  <div class="t" style="left:60.6px;top:318.5px;font-size:6.3px;color:#b8b8b8">Prev</div>
  <div class="t" style="left:98.3px;top:319.2px;font-size:6.4px;color:#333">Page 1 of 17</div>
  <div class="btn" style="left:149.4px;top:313.2px;width:33.2px;height:17px;background:#dedede;font-size:6.4px;padding-top:6px;color:#444">Next</div>
  <div class="btn" style="left:186.5px;top:313.2px;width:33.2px;height:17px;background:#dedede;font-size:6.4px;padding-top:6px;color:#444">Last</div>
  <div class="t" style="left:230.6px;top:319.2px;font-size:6.25px;color:#7a7a7a">Showing 20 of 325 package(s) - Page 1 of 17</div>
  <div class="btn" style="left:489.2px;top:313.2px;width:74.7px;height:16.7px;background:#1a6656;color:#fff;font-size:5.6px;padding-top:5.8px;border-radius:1px">SELECT PACKAGE</div>
  <div class="btn" style="left:569px;top:313.2px;width:49px;height:16.7px;background:#dcdcdc;color:#555;font-size:5.9px;padding-top:6.1px;border-radius:1px">Cancel</div>
</div>
</body></html>
